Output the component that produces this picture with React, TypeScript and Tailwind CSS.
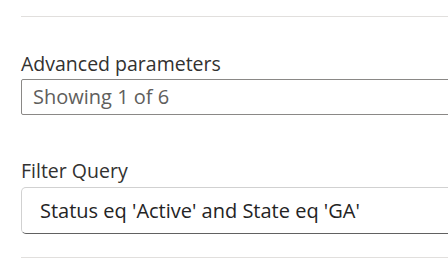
export default function App() {
  return (
    <div
      className="w-[448px] h-[274px] overflow-hidden bg-white pl-[21px]"
      style={{ fontFamily: '"Open Sans", "Noto Sans", sans-serif' }}
    >
      <div className="pt-[16px]">
        <div className="h-px bg-[#e1dfdd]" />
      </div>

      {/* Advanced parameters */}
      <div className="mt-[33px]">
        <label className="block text-[19.5px] leading-[28px] text-[#323130]">
          Advanced parameters
        </label>
        <div className="mt-px h-[36px] w-[460px] rounded-[2px] border border-[#8a8886] flex items-center px-[11px]">
          <span className="text-[20px] text-[#605e5c]">Showing 1 of 6</span>
        </div>
      </div>

      {/* Filter Query */}
      <div className="mt-[42px]">
        <label className="block text-[19.5px] leading-[28px] text-[#323130]">
          Filter Query
        </label>
        <div className="mt-[2px] h-[47px] w-[460px] rounded-[5px] border border-[#d1d1d1] border-b-[#616161] flex items-center px-[18px]">
          <span className="text-[20px] text-[#242424]">
            Status eq 'Active' and State eq 'GA'
          </span>
        </div>
      </div>

      <div className="mt-[23px] h-px bg-[#e1dfdd]" />
    </div>
  );
}
